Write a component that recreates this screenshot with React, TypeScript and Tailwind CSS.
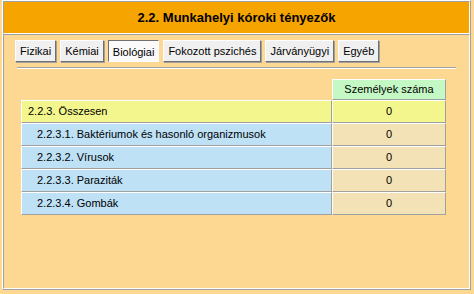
import React from "react";

const tabs = ["Fizikai", "Kémiai", "Biológiai", "Fokozott pszichés", "Járványügyi", "Egyéb"];

const rows = [
  { label: "2.2.3. Összesen", value: "0", total: true },
  { label: "2.2.3.1. Baktériumok és hasonló organizmusok", value: "0" },
  { label: "2.2.3.2. Vírusok", value: "0" },
  { label: "2.2.3.3. Paraziták", value: "0" },
  { label: "2.2.3.4. Gombák", value: "0" },
];

export default function App() {
  return (
    <div
      className="w-[474px] h-[294px] bg-[#fdd892] pl-[2px] text-[11px] text-black"
      style={{ fontFamily: '"Liberation Sans", Arial, sans-serif' }}
    >
      <div className="w-[469px] h-[290px] border border-t-white border-l-white border-r-[#a0a0a0] border-b-[#a0a0a0] flex flex-col">
        {/* header */}
        <div className="h-[33px] border border-t-[#a0a0a0] border-l-[#a0a0a0] border-r-white border-b-white bg-[#f6a400] flex items-center justify-center pt-[1px]">
          <span className="font-bold text-[13px]">2.2. Munkahelyi kóroki tényezők</span>
        </div>
        {/* content */}
        <div className="flex-1 border border-t-[#a0a0a0] border-l-[#a0a0a0] border-r-white border-b-white px-[10px] pt-[5px]">
          <div className="flex gap-[4px] pl-[1px]">
            {tabs.map((t) => (
              <div
                key={t}
                className={
                  t === "Biológiai"
                    ? "h-[22px] px-[4px] flex items-center bg-[#fafafa] border border-t-[#707070] border-l-[#707070] border-r-white border-b-white pt-[3px]"
                    : "h-[22px] px-[4px] flex items-center bg-[#f0f0f0] border border-t-white border-l-white border-r-[#707070] border-b-[#707070] shadow-[1px_1px_0_#a0a0a0]"
                }
              >
                {t}
              </div>
            ))}
          </div>
          <div className="mt-[5px] mx-[3px] border-t border-t-[#a0a0a0] border-b border-b-white" />
          <div className="mt-[10px] ml-[7px] w-[425px]">
            <div className="flex">
              <div className="flex-1" />
              <div className="w-[114px] h-[21px] bg-[#c4f8c4] border border-t-white border-l-white border-r-[#a0a0a0] border-b-[#a0a0a0] flex items-center justify-center">
                Személyek száma
              </div>
            </div>
            {rows.map((r) => (
              <div key={r.label} className="flex h-[23px]">
                <div
                  className={
                    (r.total ? "bg-[#f2f68c] pl-[6px]" : "bg-[#bee1f6] pl-[15px]") +
                    " flex-1 border border-t-white border-l-white border-r-[#a0a0a0] border-b-[#a0a0a0] flex items-center"
                  }
                >
                  {r.label}
                </div>
                <div
                  className={
                    (r.total ? "bg-[#f2f68c]" : "bg-[#f2e2b6]") +
                    " w-[114px] border border-t-white border-l-white border-r-[#a0a0a0] border-b-[#a0a0a0] flex items-center justify-center"
                  }
                >
                  {r.value}
                </div>
              </div>
            ))}
          </div>
        </div>
      </div>
    </div>
  );
}
